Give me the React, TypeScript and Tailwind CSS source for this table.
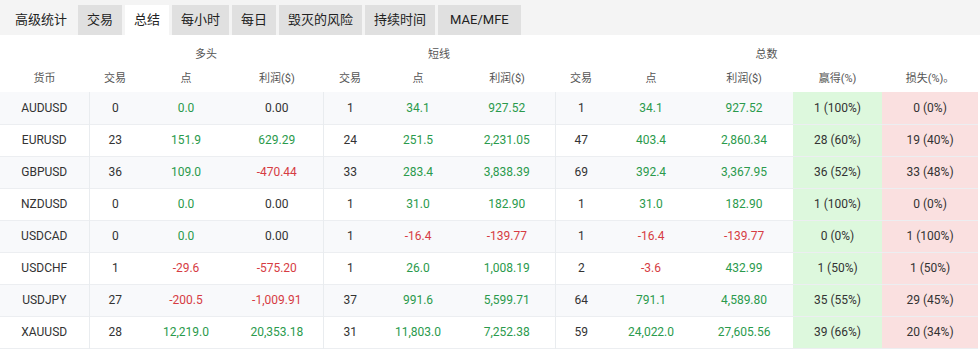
const TABS = ["交易", "总结", "每小时", "每日", "毁灭的风险", "持续时间", "MAE/MFE"];

type Row = {
  sym: string;
  long: [string, string, string];
  short: [string, string, string];
  total: [string, string, string];
  win: string;
  loss: string;
};

const ROWS: Row[] = [
  { sym: "AUDUSD", long: ["0", "0.0", "0.00"], short: ["1", "34.1", "927.52"], total: ["1", "34.1", "927.52"], win: "1 (100%)", loss: "0 (0%)" },
  { sym: "EURUSD", long: ["23", "151.9", "629.29"], short: ["24", "251.5", "2,231.05"], total: ["47", "403.4", "2,860.34"], win: "28 (60%)", loss: "19 (40%)" },
  { sym: "GBPUSD", long: ["36", "109.0", "-470.44"], short: ["33", "283.4", "3,838.39"], total: ["69", "392.4", "3,367.95"], win: "36 (52%)", loss: "33 (48%)" },
  { sym: "NZDUSD", long: ["0", "0.0", "0.00"], short: ["1", "31.0", "182.90"], total: ["1", "31.0", "182.90"], win: "1 (100%)", loss: "0 (0%)" },
  { sym: "USDCAD", long: ["0", "0.0", "0.00"], short: ["1", "-16.4", "-139.77"], total: ["1", "-16.4", "-139.77"], win: "0 (0%)", loss: "1 (100%)" },
  { sym: "USDCHF", long: ["1", "-29.6", "-575.20"], short: ["1", "26.0", "1,008.19"], total: ["2", "-3.6", "432.99"], win: "1 (50%)", loss: "1 (50%)" },
  { sym: "USDJPY", long: ["27", "-200.5", "-1,009.91"], short: ["37", "991.6", "5,599.71"], total: ["64", "791.1", "4,589.80"], win: "35 (55%)", loss: "29 (45%)" },
  { sym: "XAUUSD", long: ["28", "12,219.0", "20,353.18"], short: ["31", "11,803.0", "7,252.38"], total: ["59", "24,022.0", "27,605.56"], win: "39 (66%)", loss: "20 (34%)" },
];

// points always coloured; profit "0.00" stays neutral
function tone(v: string, isPoints: boolean) {
  if (v.startsWith("-")) return "text-[#d63c43]";
  if (!isPoints && v === "0.00") return "text-[#333]";
  return "text-[#2a9a4c]";
}

function Group({ vals, last }: { vals: [string, string, string]; last?: boolean }) {
  return (
    <>
      <td className="text-[#333]">{vals[0]}</td>
      <td className={tone(vals[1], true)}>{vals[1]}</td>
      <td className={[tone(vals[2], false), last ? "" : "border-r border-[#e9ecef]"].join(" ")}>{vals[2]}</td>
    </>
  );
}

export default function App() {
  const font = { fontFamily: "Roboto, 'Noto Sans CJK SC', sans-serif" };
  return (
    <div className="w-[980px] h-[349px] bg-white overflow-hidden" style={font}>
      <div className="h-[35px] bg-[#f4f4f4] flex items-end pl-[15px]">
        <span className="h-[30px] flex items-center text-[13px] text-[#222] mr-[11px]">高级统计</span>
        <div className="flex gap-[3px]">
          {TABS.map((t) => (
            <div
              key={t}
              className={[
                "h-[30px] flex items-center text-[13px] text-[#222]",
                t === "总结" ? "bg-white" : "bg-[#e0e0e0]",
                t === "MAE/MFE" ? "px-[12px]" : "px-[9px]",
              ].join(" ")}
            >
              {t}
            </div>
          ))}
        </div>
      </div>

      <table className="table-fixed border-collapse w-[978px] text-center">
        <colgroup>
          {[89, 52, 90, 92, 54, 82, 96, 52, 88, 98, 89, 96].map((w, i) => (
            <col key={i} style={{ width: w }} />
          ))}
        </colgroup>
        <thead className="text-[11px] text-[#555]">
          <tr>
            <th className="font-normal pt-[12px] pb-[3px] leading-[16px]" />
            <th colSpan={3} className="font-normal pt-[12px] pb-[3px] leading-[16px]">多头</th>
            <th colSpan={3} className="font-normal pt-[12px] pb-[3px] leading-[16px]">短线</th>
            <th colSpan={5} className="font-normal pt-[12px] pb-[3px] leading-[16px]">总数</th>
          </tr>
          <tr className="h-[26px]">
            {["货币", "交易", "点", "利润($)", "交易", "点", "利润($)", "交易", "点", "利润($)", "赢得(%)", "损失(%)。"].map((h, i) => (
              <th key={i} className="font-normal leading-[16px]">{h}</th>
            ))}
          </tr>
        </thead>
        <tbody className="text-[12px]">
          {ROWS.map((r, i) => (
            <tr key={r.sym} className={["h-[32px] border-b border-[#eceef1]", i % 2 === 0 ? "bg-[#f8f9fb]" : "bg-white"].join(" ")}>
              <td className="text-[#333] border-r border-[#e9ecef]">{r.sym}</td>
              <Group vals={r.long} />
              <Group vals={r.short} />
              <Group vals={r.total} last />
              <td className="bg-[#ddf8dd] text-[#333]">{r.win}</td>
              <td className="bg-[#fae0e0] text-[#333]">{r.loss}</td>
            </tr>
          ))}
        </tbody>
      </table>
    </div>
  );
}
